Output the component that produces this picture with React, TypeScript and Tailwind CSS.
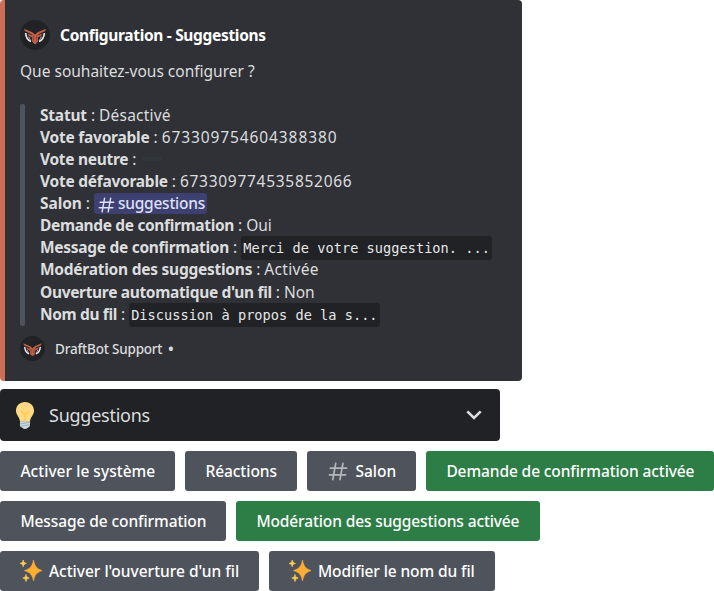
import type { ReactNode } from 'react'

function Logo({ className }: { className: string }) {
  return (
    <svg viewBox="0 0 30 30" className={className}>
      <circle cx="15" cy="15" r="15" fill="#202225" />
      <path d="M5.6 13C6 17.4 7.8 20.4 11 21.4M24.4 13C24 17.4 22.2 20.4 19 21.4" fill="none" stroke="#e9e9ea" strokeWidth="1.7" />
      <path d="M8.8 16.6C9 18 9.6 19.2 10.6 20.2M21.2 16.6C21 18 20.4 19.2 19.4 20.2" fill="none" stroke="#bdbdbf" strokeWidth="1" />
      <path d="M4 8.8L12.4 12.2L15 14.6L17.6 12.2L26 8.8L25.2 11L18.4 14.2L17.8 21.8L15 24.4L12.2 21.8L11.6 14.2L4.8 11Z" fill="#c25d47" />
      <path d="M7.6 13.6L12.4 15.6V17.6L8.6 15.8ZM22.4 13.6L17.6 15.6V17.6L21.4 15.8Z" fill="#c25d47" />
      <path d="M13.4 15.4V20.6M16.6 15.4V20.6" fill="none" stroke="#8a4234" strokeWidth=".9" />
    </svg>
  )
}

function Hash({ className }: { className: string }) {
  return (
    <svg viewBox="0 0 20 20" className={className} fill="none" stroke="currentColor" strokeWidth="1.8" strokeLinecap="round">
      <path d="M7.6 1.5L4.5 18.5M15.2 1.5L12.1 18.5M2 6.5H19M1 13.5H18" />
    </svg>
  )
}

function Bulb() {
  return (
    <svg viewBox="0 0 18 27" className="h-[27px] w-[18px]">
      <path d="M9 0C3.8 0 0 3.8 0 8.7C0 13 3.5 14.6 4 19.4H14C14.5 14.6 18 13 18 8.7C18 3.8 14.2 0 9 0Z" fill="#ffd983" />
      <path d="M9 19V13L5.6 9.6M9 13L12.4 9.6" fill="none" stroke="#ffcc4d" strokeWidth="1.6" strokeLinecap="round" />
      <path d="M4 19.2H14V23.6C14 25 12.2 25.3 11.4 26C10.4 27.2 7.6 27.2 6.6 26C5.8 25.3 4 25 4 23.6Z" fill="#ccd6dd" />
      <path d="M3.8 22L14.2 20.2M4 24.4L14 22.6" stroke="#99aab5" strokeWidth=".9" />
    </svg>
  )
}

function Sparkles() {
  return (
    <svg viewBox="0 0 22 22" className="mr-[7px] -ml-[0.5px] h-[22px] w-[22px] shrink-0">
      <path d="M13.5 0C14.8 6.4 16.4 8.4 22 10.6C16.4 12.8 14.8 14.6 13.5 21C12.2 14.6 10.6 12.8 4.5 10.6C10.6 8.4 12.2 6.4 13.5 0Z" fill="#ffac33" stroke="#ffac33" strokeWidth=".6" />
      <path d="M3.2 0C3.7 2.3 4.2 2.8 6.4 3.4C4.2 4 3.7 4.5 3.2 6.8C2.7 4.5 2.2 4 0 3.4C2.2 2.8 2.7 2.3 3.2 0Z" fill="#ffcc4d" stroke="#ffcc4d" strokeWidth=".7" />
      <path d="M6 14.4C6.5 16.8 7 17.4 9.2 18C7 18.6 6.5 19.2 6 21.6C5.5 19.2 5 18.6 2.8 18C5 17.4 5.5 16.8 6 14.4Z" fill="#ffcc4d" stroke="#ffcc4d" strokeWidth=".7" />
    </svg>
  )
}

function Row({ label, tracking, children }: { label: string; tracking: string; children: ReactNode }) {
  return (
    <div className="flex h-[22.1px] items-center whitespace-pre">
      <span className={`font-bold ${tracking}`}>{label}</span>
      <span className="ml-1">:</span>
      {children}
    </div>
  )
}

function Code({ className, children }: { className: string; children: ReactNode }) {
  return (
    <code
      className={`mt-[2px] ml-[4px] flex h-6 items-center rounded-[3px] bg-[#202225] pl-[2px] font-['DejaVu_Sans_Mono',monospace] text-[13.6px] text-[#e6e7e8] ${className}`}
    >
      {children}
    </code>
  )
}

function Button({ className, children }: { className: string; children: ReactNode }) {
  return (
    <button className={`flex h-10 shrink-0 items-center rounded-[3px] pl-[20.4px] font-medium whitespace-nowrap text-white ${className}`}>
      {children}
    </button>
  )
}

export default function App() {
  return (
    <div className="h-[591px] w-[714px] overflow-hidden bg-white font-['Noto_Sans',sans-serif] text-[15.5px] leading-[22px]">
      <section className="h-[381px] w-[522px] rounded-[4px] border-l-[5px] border-[#cf6e57] bg-[#2f3136] pl-[15px] text-[#dcddde]">
        <header className="flex items-center pt-5">
          <Logo className="size-[30px]" />
          <h1 className="ml-[10px] text-[15.5px] font-bold tracking-[-0.32px] text-white">Configuration - Suggestions</h1>
        </header>
        <p className="mt-[10px]">Que souhaitez-vous configurer ?</p>

        <div className="mt-[22px] flex h-[222px]">
          <div className="w-[5px] rounded-[2px] bg-[#4f545c]" />
          <div className="-mt-[0.3px] ml-[15px]">
            <Row label="Statut" tracking="tracking-[-0.2px]">
              <span className="ml-1 tracking-[0.2px]">Désactivé</span>
            </Row>
            <Row label="Vote favorable" tracking="tracking-[-0.24px]">
              <span className="ml-1 tracking-[0.9px]">673309754604388380</span>
            </Row>
            <Row label="Vote neutre" tracking="tracking-[-0.3px]">
              <span className="ml-[6px] h-1 w-5 rounded-full bg-[#30383b]" />
            </Row>
            <Row label="Vote défavorable" tracking="tracking-[-0.26px]">
              <span className="ml-1 tracking-[0.72px]">673309774535852066</span>
            </Row>
            <Row label="Salon" tracking="tracking-[-0.1px]">
              <span className="ml-[4px] flex h-[21px] w-[113px] items-center rounded-[3px] bg-[#3d4070] pl-[4px] font-medium text-[#dee0fc]">
                <Hash className="mt-1 h-[16px] w-[17px]" />
                <span className="ml-[3px] tracking-[-0.23px]">suggestions</span>
              </span>
            </Row>
            <Row label="Demande de confirmation" tracking="tracking-[-0.35px]">
              <span className="ml-1">Oui</span>
            </Row>
            <Row label="Message de confirmation" tracking="tracking-[-0.29px]">
              <Code className="w-[251px] tracking-[0.04px]">Merci de votre suggestion. ...</Code>
            </Row>
            <Row label="Modération des suggestions" tracking="tracking-[-0.25px]">
              <span className="ml-1 tracking-[0.3px]">Activée</span>
            </Row>
            <Row label="Ouverture automatique d'un fil" tracking="tracking-[-0.33px]">
              <span className="ml-1">Non</span>
            </Row>
            <Row label="Nom du fil" tracking="tracking-[-0.36px]">
              <Code className="w-[251px] tracking-[0.03px]">Discussion à propos de la s...</Code>
            </Row>
          </div>
        </div>

        <footer className="mt-[10px] flex items-center">
          <Logo className="size-[25px]" />
          <span className="ml-[10px] text-[13.5px] font-medium tracking-[-0.2px]">DraftBot Support</span>
          <span className="ml-[6px] text-[14px] font-bold">•</span>
        </footer>
      </section>

      <div className="mt-2 flex h-[52px] w-[500px] items-center rounded-[4px] bg-[#202225] pl-4 text-[#dcddde]">
        <Bulb />
        <span className="ml-[15px] text-[18px] tracking-[-0.25px]">Suggestions</span>
        <svg viewBox="0 0 16 10" className="mr-[18px] ml-auto h-[10px] w-4" fill="none" stroke="#dcddde" strokeWidth="2.6">
          <path d="M1.3 1.3L8 8L14.7 1.3" />
        </svg>
      </div>

      <div className="mt-[10px] flex gap-[10px]">
        <Button className="w-[175px] bg-[#4f545c]">
          <span className="tracking-[0.03px]">Activer le système</span>
        </Button>
        <Button className="w-[112px] bg-[#4f545c]">
          <span className="tracking-[-0.05px]">Réactions</span>
        </Button>
        <Button className="w-[109px] bg-[#4f545c]">
          <Hash className="ml-[1px] h-[19px] w-5 text-[#b4b6ba]" />
          <span className="ml-[7px]">Salon</span>
        </Button>
        <Button className="w-[288px] bg-[#2d7d46]">
          <span className="tracking-[-0.1px]">Demande de confirmation activée</span>
        </Button>
      </div>
      <div className="mt-[10px] flex gap-[10px]">
        <Button className="w-[226px] bg-[#4f545c]">
          <span className="tracking-[-0.09px]">Message de confirmation</span>
        </Button>
        <Button className="w-[304px] bg-[#2d7d46]">
          <span className="tracking-[-0.12px]">Modération des suggestions activée</span>
        </Button>
      </div>
      <div className="mt-[10px] flex gap-[10px]">
        <Button className="w-[259px] bg-[#4f545c]">
          <Sparkles />
          <span>Activer l'ouverture d'un fil</span>
        </Button>
        <Button className="w-[226px] bg-[#4f545c]">
          <Sparkles />
          <span className="tracking-[-0.1px]">Modifier le nom du fil</span>
        </Button>
      </div>
    </div>
  )
}
